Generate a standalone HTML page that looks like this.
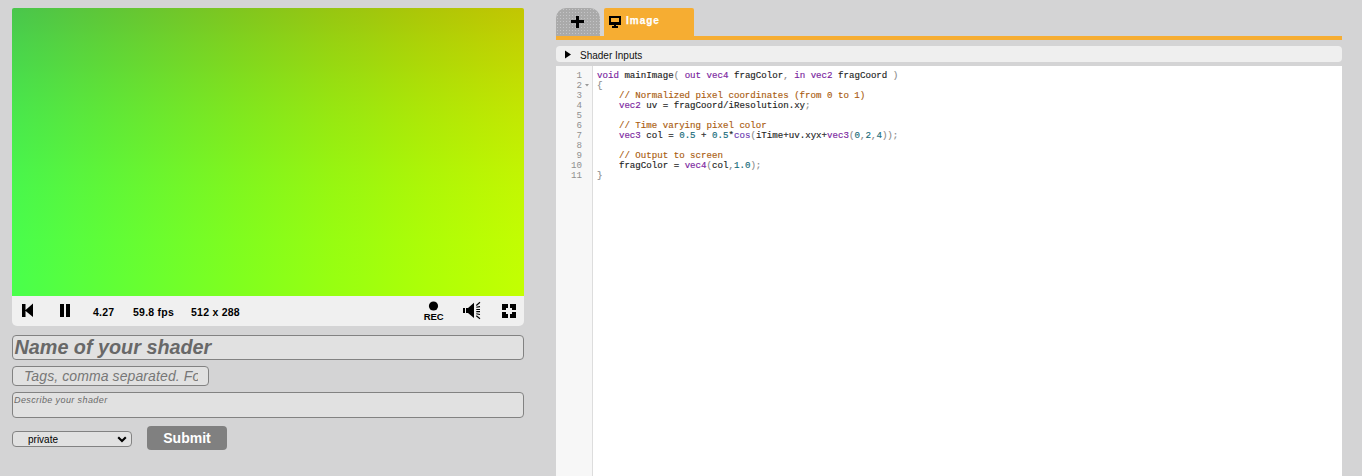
<!DOCTYPE html>
<html><head><meta charset="utf-8">
<style>
html,body{margin:0;padding:0;}
body{width:1362px;height:476px;overflow:hidden;position:relative;background:#d4d4d5;font-family:"Liberation Sans",sans-serif;}
.abs{position:absolute;}
#cv{left:12px;top:8px;width:512px;height:288px;border-radius:2px 2px 0 0;
background-image:linear-gradient(to right,rgb(73,0,76) 0.00%,rgb(80,0,69) 6.25%,rgb(88,0,62) 12.50%,rgb(95,0,55) 18.75%,rgb(103,0,49) 25.00%,rgb(111,0,43) 31.25%,rgb(119,0,37) 37.50%,rgb(127,0,31) 43.75%,rgb(135,0,26) 50.00%,rgb(143,0,22) 56.25%,rgb(151,0,17) 62.50%,rgb(158,0,14) 68.75%,rgb(166,0,10) 75.00%,rgb(174,0,7) 81.25%,rgb(181,0,5) 87.50%,rgb(188,0,3) 93.75%,rgb(195,0,2) 100.00%),linear-gradient(to top,rgb(0,255,0) 0.00%,rgb(0,255,0) 6.25%,rgb(0,254,0) 12.50%,rgb(0,253,0) 18.75%,rgb(0,251,0) 25.00%,rgb(0,249,0) 31.25%,rgb(0,247,0) 37.50%,rgb(0,244,0) 43.75%,rgb(0,240,0) 50.00%,rgb(0,236,0) 56.25%,rgb(0,232,0) 62.50%,rgb(0,227,0) 68.75%,rgb(0,222,0) 75.00%,rgb(0,216,0) 81.25%,rgb(0,211,0) 87.50%,rgb(0,204,0) 93.75%,rgb(0,198,0) 100.00%);
background-blend-mode:screen;}
#bar{left:12px;top:296px;width:512px;height:30px;background:#f0f0f0;border-radius:0 0 5px 5px;}
.ctl{font-weight:bold;font-size:10.5px;letter-spacing:0.25px;color:#000;top:306px;line-height:12px;}
.inp{background:#e1e1e1;border:1px solid #828282;border-radius:4px;box-sizing:border-box;}
#name{left:12px;top:335px;width:512px;height:25px;}
#name span{position:absolute;left:1.5px;top:0px;font-size:19.8px;font-weight:bold;font-style:italic;color:#686868;line-height:22px;white-space:nowrap;}
#tags{left:12px;top:366px;width:197px;height:20px;}
#tags .clip{position:absolute;left:0;top:0;width:185px;height:18px;overflow:hidden;}
#tags span{position:absolute;left:11px;top:1px;font-size:14px;letter-spacing:0.1px;font-style:italic;color:#777;line-height:16px;white-space:nowrap;}
#desc{left:12px;top:392px;width:512px;height:26px;}
#desc span{position:absolute;left:1px;top:1px;font-size:9px;letter-spacing:0.4px;font-style:italic;color:#6a6a6a;line-height:12px;white-space:nowrap;}
#sel{left:12px;top:431px;width:120px;height:16px;}
#sel span{position:absolute;left:15px;top:2px;font-size:10px;color:#000;line-height:12px;}
#sub{left:147px;top:426px;width:80px;height:24px;background:#808080;border-radius:4px;color:#fff;font-weight:bold;font-size:14px;text-align:center;line-height:24px;}
#ptab{left:556px;top:8px;width:44px;height:28px;background:radial-gradient(circle at 1.5px 1.5px,#c4c4c6 0.55px,rgba(0,0,0,0) 0.9px) 0 0/3px 3px,#aaaaaa;border-radius:10px 10px 0 0;}
#itab{left:604px;top:8px;width:90px;height:28px;background:#f6ad32;border-radius:2px 2px 0 0;}
#obar{left:556px;top:36px;width:786px;height:4px;background:#f6ad32;}
#sin{left:556px;top:46px;width:786px;height:16px;background:#efefef;border-radius:4px;}
#sin span{position:absolute;left:24px;top:3.5px;font-size:10px;color:#111;line-height:12px;}
#ed{left:556px;top:66px;width:786px;height:410px;background:#fff;}
#gut{left:0;top:0;width:36px;height:410px;background:#f7f7f7;border-right:1px solid #ddd;}
.ln{position:absolute;right:10px;width:30px;text-align:right;font-family:"Liberation Mono",monospace;font-size:9.15px;color:#8f8f8f;line-height:10px;}
#code{left:41px;top:5px;font-family:"Liberation Mono",monospace;font-size:9.15px;line-height:10px;color:#1e1e1e;white-space:pre;-webkit-text-stroke:0.15px currentColor;}
.k{color:#7a1e9e}.c{color:#aa5c10}.n{color:#156a78}.p{color:#8a8a8a}.f{color:#6a38b0}
</style></head><body>
<div id="cv" class="abs"></div>
<div id="bar" class="abs">
</div>
<div class="abs ctl" style="left:93px">4.27</div>
<div class="abs ctl" style="left:133px">59.8 fps</div>
<div class="abs ctl" style="left:191px">512 x 288</div>
<div class="abs" style="left:423.8px;top:311.5px;font-size:9.5px;letter-spacing:-0.1px;font-weight:bold;line-height:10px">REC</div>

<div id="name" class="abs inp"><span>Name of your shader</span></div>
<div id="tags" class="abs inp"><div class="clip"><span>Tags, comma separated. For example: noise, fractal</span></div></div>
<div id="desc" class="abs inp"><span>Describe your shader</span></div>
<div id="sel" class="abs inp"><span>private</span></div>
<div id="sub" class="abs">Submit</div>

<div id="ptab" class="abs"></div>
<div id="itab" class="abs"><span style="position:absolute;left:22px;top:7px;font-size:10px;letter-spacing:1px;-webkit-text-stroke:0.25px #fff;font-weight:bold;color:#fff;line-height:12px">Image</span></div>
<div id="obar" class="abs"></div>
<div id="sin" class="abs"><span>Shader Inputs</span></div>
<div id="ed" class="abs">
<div id="gut" class="abs"><div class="ln" style="top:5px">1</div><div class="ln" style="top:15px">2</div><div class="ln" style="top:25px">3</div><div class="ln" style="top:35px">4</div><div class="ln" style="top:45px">5</div><div class="ln" style="top:55px">6</div><div class="ln" style="top:65px">7</div><div class="ln" style="top:75px">8</div><div class="ln" style="top:85px">9</div><div class="ln" style="top:95px">10</div><div class="ln" style="top:105px">11</div></div>
<div id="code" class="abs"><span class="k">void</span> mainImage<span class="p">(</span> <span class="k">out</span> <span class="k">vec4</span> fragColor<span class="p">,</span> <span class="k">in</span> <span class="k">vec2</span> fragCoord <span class="p">)</span>
<span class="p">{</span>
    <span class="c">// Normalized pixel coordinates (from 0 to 1)</span>
    <span class="k">vec2</span> uv = fragCoord/iResolution.xy<span class="p">;</span>

    <span class="c">// Time varying pixel color</span>
    <span class="k">vec3</span> col = <span class="n">0.5</span> + <span class="n">0.5</span>*<span class="f">cos</span><span class="p">(</span>iTime+uv.xyx+<span class="k">vec3</span><span class="p">(</span><span class="n">0</span><span class="p">,</span><span class="n">2</span><span class="p">,</span><span class="n">4</span><span class="p">));</span>

    <span class="c">// Output to screen</span>
    fragColor = <span class="k">vec4</span><span class="p">(</span>col<span class="p">,</span><span class="n">1.0</span><span class="p">);</span>
<span class="p">}</span></div>
</div>
<svg class="abs" style="left:0;top:0" width="1362" height="476">
<!-- rewind -->
<path d="M22 304h3.5v13h-3.5z M25 310.5 L33 303.5 V317 Z" fill="#000"/>
<!-- pause -->
<rect x="60" y="304" width="4" height="13" fill="#000"/>
<rect x="66" y="304" width="4" height="13" fill="#000"/>
<!-- rec -->
<circle cx="433.5" cy="306" r="4.6" fill="#000"/>
<!-- speaker -->
<path d="M463 308h2v5h-2z M466 308 H468 L474 302.8 V318 L468 313 H466 Z" fill="#000"/>
<path d="M476.3 305.5 L480 302.3 M476.3 307.3 L480 306.6 M476.3 309.5 H480 M476.3 311.6 H480 M476.3 313.8 L480 314.5 M476.3 315.8 L480 318.8" stroke="#000" stroke-width="1.15" fill="none"/>
<!-- fullscreen -->
<path d="M502 304h6v4h-2v2h-4z M510 304h6v6h-4v-2h-2z M502 312h4v2h2v4h-6z M512 312h4v6h-6v-4h2z" fill="#000"/>
<!-- plus tab -->
<path d="M571 20h13v3h-13z M576 16h3v12h-3z" fill="#000"/>
<!-- monitor -->
<path d="M609 16h12v9h-12z M611 18h8v4h-8z M614 25h2v1h-2z M612 26h6v2h-6z" fill="#000" fill-rule="evenodd"/>
<!-- triangle -->
<path d="M565 50.5 L571 54.5 L565 58.5 Z" fill="#000"/>
<!-- fold marker -->
<path d="M585 84 L589 84 L587 86.5 Z" fill="#999"/>
<!-- chevron -->
<path d="M118.2 437.2 L122 441 L125.8 437.2" stroke="#000" stroke-width="2.1" fill="none"/>
</svg>
</body></html>
